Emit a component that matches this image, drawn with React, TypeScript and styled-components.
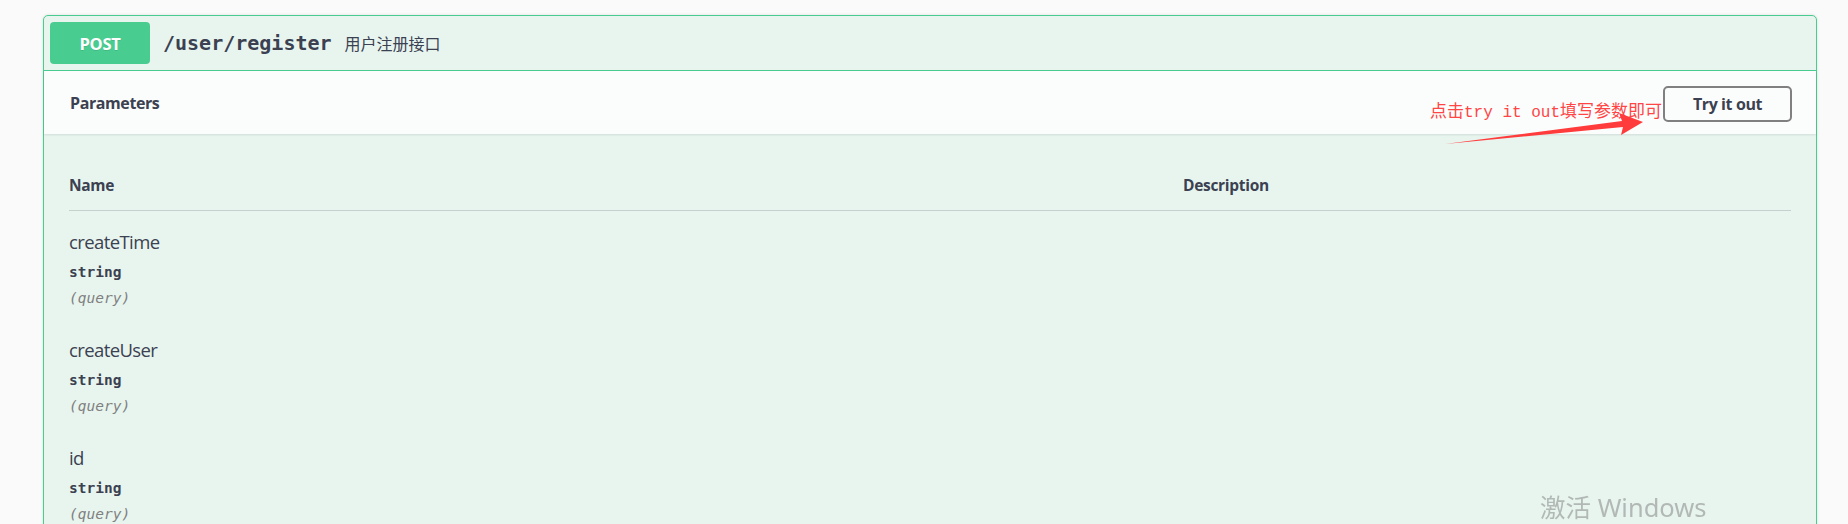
import React from "react";
import styled, { createGlobalStyle } from "styled-components";

const Global = createGlobalStyle`
  html, body { margin: 0; padding: 0; overflow: hidden; background: #fafafa; }
  body { font-family: Lato, "Noto Sans", "Noto Sans CJK SC", sans-serif; color: #3b4151; }
  * { box-sizing: border-box; }
`;

const Page = styled.div`
  padding: 15px 31px 0 43px;
  height: 524px;
`;

const Card = styled.section`
  border: 1px solid #49cc90;
  border-radius: 5px;
  background: #e8f5ef;
  box-shadow: 0 0 3px rgba(0, 0, 0, 0.12);
  min-height: 560px;
`;

const Summary = styled.header`
  display: flex;
  align-items: center;
  padding: 6px;
  border-bottom: 1px solid #49cc90;
`;

const Method = styled.span`
  width: 100px;
  height: 42px;
  display: flex;
  align-items: center;
  justify-content: center;
  background: #49cc90;
  border-radius: 4px;
  color: #fff;
  font-family: "Open Sans", sans-serif;
  font-weight: 700;
  font-size: 16.5px;
  letter-spacing: -0.3px;
  text-shadow: 0 1px 0 rgba(0, 0, 0, 0.1);
`;

const Path = styled.span`
  margin-left: 13px;
  font-family: "DejaVu Sans Mono", monospace;
  font-weight: 700;
  font-size: 20px;
  color: #3b4151;
`;

const Desc = styled.span`
  margin-left: 13px;
  font-family: "Noto Sans CJK SC", sans-serif;
  font-size: 16px;
  color: #3b4151;
`;

const SectionHeader = styled.div`
  position: relative;
  height: 63px;
  display: flex;
  align-items: center;
  justify-content: space-between;
  padding: 0 24px 0 26px;
  background: rgba(255, 255, 255, 0.8);
  box-shadow: 0 1px 2px rgba(0, 0, 0, 0.1);
  z-index: 1;
`;

const SectionTitle = styled.h4`
  margin: 0;
  font-family: "Open Sans", sans-serif;
  font-weight: 700;
  font-size: 16px;
  letter-spacing: -0.4px;
  color: #3b4151;
`;

const TryButton = styled.button`
  width: 129px;
  height: 36px;
  border: 2px solid #808080;
  border-radius: 5px;
  background: transparent;
  font-family: "Open Sans", sans-serif;
  font-weight: 700;
  font-size: 16px;
  letter-spacing: -0.4px;
  color: #3b4151;
  padding: 0;
  margin-top: 2px;
`;

const Note = styled.span`
  position: absolute;
  left: 1386px;
  top: 27px;
  font-family: "Noto Sans CJK SC", sans-serif;
  font-size: 17px;
  line-height: 24px;
  color: #ff4545;
  white-space: nowrap;
`;

const NoteLatin = styled.span`
  font-family: "Liberation Mono", monospace;
  font-size: 16px;
`;

const Arrow = styled.svg`
  position: absolute;
  left: 1396px;
  top: 37px;
  overflow: visible;
`;

const TableWrap = styled.div`
  padding: 25px 25px 0 25px;
`;

const HeadRow = styled.div`
  display: grid;
  grid-template-columns: 1114px 1fr;
  padding: 15px 0 14px;
  border-bottom: 1px solid rgba(59, 65, 81, 0.2);
  line-height: 22px;
`;

const HeadCell = styled.div`
  font-family: "Open Sans", sans-serif;
  font-weight: 700;
  font-size: 15.5px;
  letter-spacing: -0.3px;
  color: #3b4151;
`;

const Row = styled.div`
  display: grid;
  grid-template-columns: 1114px 1fr;
  padding: 19px 0 11px;
`;

const NameCol = styled.div`
  display: flex;
  flex-direction: column;
`;

const ParamName = styled.div`
  font-family: "Open Sans", sans-serif;
  font-size: 18.5px;
  letter-spacing: -0.6px;
  line-height: 24px;
  color: #3b4151;
`;

const ParamType = styled.div`
  margin-top: 8px;
  font-family: "DejaVu Sans Mono", monospace;
  font-weight: 700;
  font-size: 14.5px;
  line-height: 20px;
  color: #3b4151;
`;

const ParamIn = styled.div`
  margin-top: 6px;
  font-family: "DejaVu Sans Mono", monospace;
  font-style: italic;
  font-size: 14.5px;
  line-height: 20px;
  color: #808080;
`;

const Watermark = styled.div`
  position: fixed;
  left: 1540px;
  top: 491px;
  font-family: "Noto Sans", "Noto Sans CJK SC", sans-serif;
  font-size: 25.5px;
  line-height: 32px;
  color: rgba(110, 110, 110, 0.45);
  pointer-events: none;
`;

const params = ["createTime", "createUser", "id"];

export default function App() {
  return (
    <>
      <Global />
      <Page>
        <Card>
          <Summary>
            <Method>POST</Method>
            <Path>/user/register</Path>
            <Desc>用户注册接口</Desc>
          </Summary>
          <SectionHeader>
            <SectionTitle>Parameters</SectionTitle>
            <Note>
              点击<NoteLatin>try it out</NoteLatin>填写参数即可
            </Note>
            <Arrow width="210" height="40" viewBox="0 0 210 40">
              <polygon
                points="5,36 182,13 179,5 203,14 181,27 183,19"
                fill="#ff3b3b"
              />
            </Arrow>
            <TryButton>Try it out</TryButton>
          </SectionHeader>
          <TableWrap>
            <HeadRow>
              <HeadCell>Name</HeadCell>
              <HeadCell>Description</HeadCell>
            </HeadRow>
            {params.map((p) => (
              <Row key={p}>
                <NameCol>
                  <ParamName>{p}</ParamName>
                  <ParamType>string</ParamType>
                  <ParamIn>(query)</ParamIn>
                </NameCol>
                <div />
              </Row>
            ))}
          </TableWrap>
        </Card>
      </Page>
      <Watermark>激活 Windows</Watermark>
    </>
  );
}
